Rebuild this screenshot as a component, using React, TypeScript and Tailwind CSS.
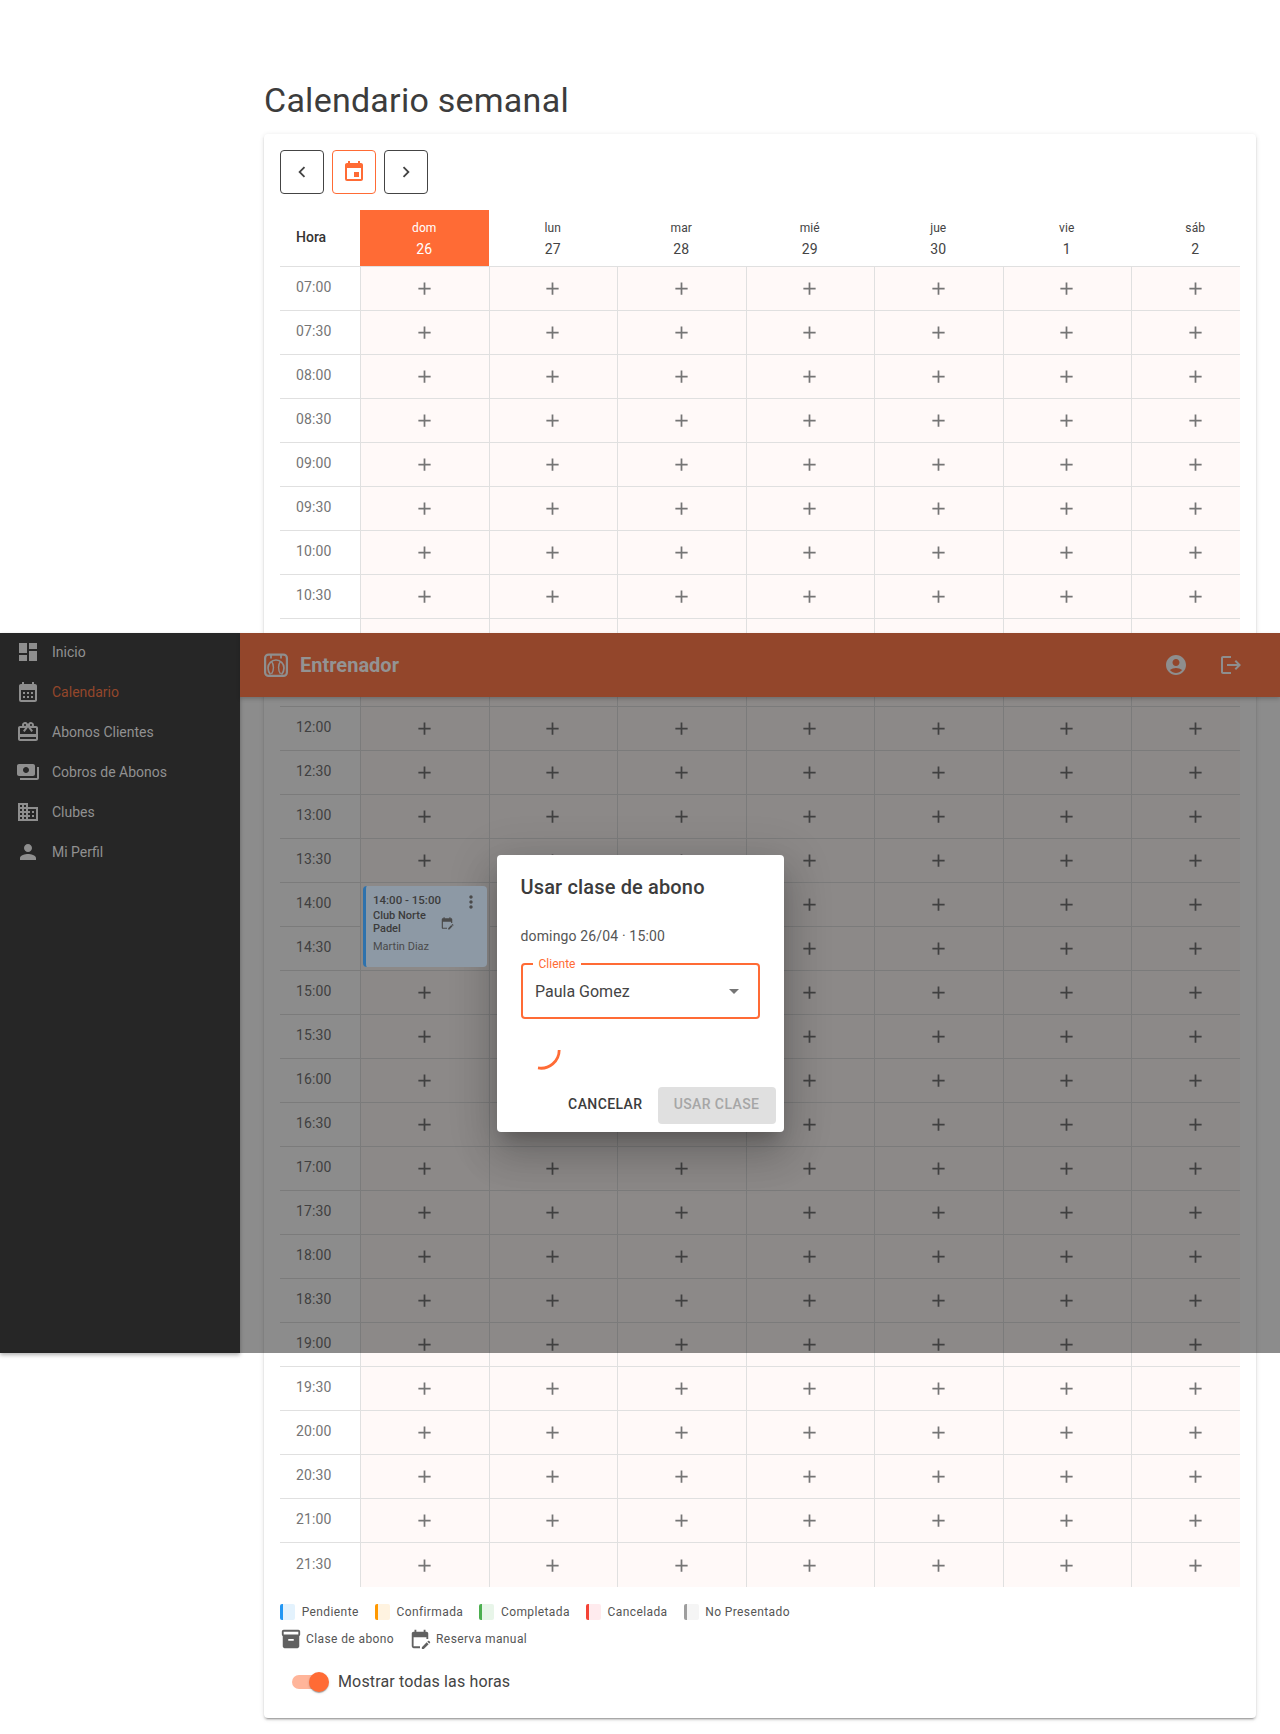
import {
  MdAdd,
  MdAccountCircle,
  MdArrowDropDown,
  MdCalendarMonth,
  MdChevronLeft,
  MdChevronRight,
  MdDashboard,
  MdDomain,
  MdEditCalendar,
  MdEvent,
  MdInventory2,
  MdLogout,
  MdMoreVert,
  MdOutlineCardGiftcard,
  MdPayments,
  MdPerson,
} from "react-icons/md";

const days = [
  { name: "dom", num: 26 },
  { name: "lun", num: 27 },
  { name: "mar", num: 28 },
  { name: "mié", num: 29 },
  { name: "jue", num: 30 },
  { name: "vie", num: 1 },
  { name: "sáb", num: 2 },
];

const hours: string[] = [];
for (let h = 7; h < 22; h++) {
  const label = String(h).padStart(2, "0");
  hours.push(`${label}:00`, `${label}:30`);
}

const legend = [
  { label: "Pendiente", swatch: "bg-[#e3f2fd] border-[#2196f3]" },
  { label: "Confirmada", swatch: "bg-[#fff3e0] border-[#ff9800]" },
  { label: "Completada", swatch: "bg-[#e8f5e9] border-[#4caf50]" },
  { label: "Cancelada", swatch: "bg-[#ffebee] border-[#f44336]" },
  { label: "No Presentado", swatch: "bg-[#f5f5f5] border-[#9e9e9e]" },
];

const menu = [
  { label: "Inicio", icon: MdDashboard },
  { label: "Calendario", icon: MdCalendarMonth, active: true },
  { label: "Abonos Clientes", icon: MdOutlineCardGiftcard },
  { label: "Cobros de Abonos", icon: MdPayments },
  { label: "Clubes", icon: MdDomain },
  { label: "Mi Perfil", icon: MdPerson },
];

function Booking() {
  return (
    <div className="relative z-10 h-full rounded-[4px] border-l-[3px] border-[#2e72ad] bg-[#8d99a5] pl-[7px] pt-[6px] text-[#3c3c3c]">
      <div className="text-[11.5px] leading-[16px] font-medium">14:00 - 15:00</div>
      <div className="mt-[1px] w-[70px] text-[11px] leading-[13px] font-medium text-[#3c3c3c]">Club Norte Padel</div>
      <div className="mt-[4px] text-[11px] leading-[15px] text-[#4a4a4a]">Martin Diaz</div>
      <MdMoreVert className="absolute right-[6px] top-[6px] text-[#4a4a4a]" size={20} />
      <MdEditCalendar className="absolute right-[33px] top-[30px] text-[#4a4a4a]" size={14} />
    </div>
  );
}

function Calendar() {
  return (
    <div className="w-full overflow-hidden">
      <div className="grid w-[980px] grid-cols-[80px_repeat(7,128.5px)]">
        <div className="flex h-[57px] items-center border-b border-[#e0e0e0] pb-[2px] pl-[16px] text-[14px] font-medium text-[#333]">
          Hora
        </div>
        {days.map((d, i) => (
          <div
            key={d.name}
            className={`flex h-[57px] flex-col items-center border-b border-[#e0e0e0] pt-[9px] ${
              i === 0 ? "bg-[#ff6b35] text-white" : "bg-white text-[#444]"
            }`}
          >
            <span className="text-[12px] leading-[18px] tracking-[0.1px]">{d.name}</span>
            <span className="mt-[2px] text-[14px] leading-[20px] tracking-[0.1px]">{d.num}</span>
          </div>
        ))}
        {hours.map((hour, r) => {
          const last = r === hours.length - 1;
          const line = last ? "" : "border-b border-[#e0e0e0]";
          return [
            <div
              key={hour}
              className={`flex h-[44px] items-center pb-[2px] pl-[16px] text-[14px] tracking-[0.1px] text-[#757575] ${line}`}
            >
              {hour}
            </div>,
            ...days.map((d, i) => {
              if (hour === "14:30" && i === 0) return null;
              if (hour === "14:00" && i === 0) {
                return (
                  <div
                    key={d.name + hour}
                    className="row-span-2 h-[88px] border-b border-l border-[#e0e0e0] bg-[#fff9f8] px-[2px] py-[3px]"
                  >
                    <Booking />
                  </div>
                );
              }
              return (
                <div
                  key={d.name + hour}
                  className={`flex h-[44px] items-center justify-center border-l border-[#e0e0e0] bg-[#fff9f8] pr-[1px] text-[#757575] ${line}`}
                >
                  <MdAdd size={21} />
                </div>
              );
            }),
          ];
        })}
      </div>
    </div>
  );
}

function Logo() {
  return (
    <svg width="24" height="24" viewBox="0 0 24 24" fill="none" stroke="#8f8f8f" strokeWidth="2.2">
      <rect x="1.1" y="1.6" width="21.8" height="21.3" rx="3.5" />
      <path d="M7 1v4.5M17 1v4.5" strokeWidth="1.8" />
      <path d="M4 15a8 8 0 0 1 16 0c0 3-1.2 5-2.5 6.5M4 15c0 3 1.2 5 2.5 6.5" strokeWidth="1.7" />
      <path d="M7.5 8.5c2.6 3 2.6 9 0 12.5M16.5 8.5c-2.6 3-2.6 9 0 12.5" strokeWidth="1.4" />
    </svg>
  );
}

function Dialog() {
  return (
    <div className="flex h-[277px] w-[287px] flex-col rounded-[4px] bg-white shadow-[0_11px_15px_-7px_rgba(0,0,0,0.2),0_24px_38px_3px_rgba(0,0,0,0.14),0_9px_46px_8px_rgba(0,0,0,0.12)]">
      <h2 className="px-6 pt-4 text-[20px] leading-[32px] font-medium tracking-[0.15px] text-[#3c3c3c]">
        Usar clase de abono
      </h2>
      <p className="mt-[23px] px-6 text-[14px] leading-[21px] tracking-[0.15px] text-[#555]">domingo 26/04 · 15:00</p>
      <div className="relative mx-6 mt-[16px] flex h-[56px] items-center justify-between rounded-[4px] border-2 border-[#ff6b35] pl-[12.5px] pr-[12px] text-[16px] text-[#444]">
        <span className="absolute left-[10px] top-[-8px] bg-white px-[6px] text-[12px] leading-[14px] text-[#ff6b35]">
          Cliente
        </span>
        <span className="mt-[2px]">Paula Gomez</span>
        <MdArrowDropDown className="text-[#757575]" size={24} />
      </div>
      <div className="mx-6 mt-[11px] h-[40px] w-[40px]">
        <svg width="40" height="40" viewBox="0 0 40 40" fill="none">
          <path d="M38.2 20A18.2 18.2 0 0 1 17 37.95" stroke="#ff6b35" strokeWidth="2.8" />
        </svg>
      </div>
      <div className="mt-auto flex items-center justify-end gap-[15px] pb-[8px] pr-[8px]">
        <button className="mb-[2px] text-[14px] leading-[24px] font-medium tracking-[0.4px] text-[#3c3c3c]">
          CANCELAR
        </button>
        <button className="h-[37px] w-[118px] rounded-[4px] bg-[#e0e0e0] pb-[2px] text-[14px] font-medium tracking-[0.4px] text-[#a6a6a6]">
          USAR CLASE
        </button>
      </div>
    </div>
  );
}

export default function App() {
  return (
    <div className="relative h-[1734px] overflow-hidden bg-white font-['Roboto',sans-serif] text-[#333]">
      <main className="pl-[264px] pr-[24px] pt-[79px]">
        <h1 className="mb-[13px] text-[34px] leading-[42px] tracking-[0.25px] text-[#3c3c3c]">Calendario semanal</h1>
        <section className="h-[1584px] rounded-[4px] bg-white p-4 shadow-[0_3px_1px_-2px_rgba(0,0,0,0.2),0_2px_2px_0_rgba(0,0,0,0.14),0_1px_5px_0_rgba(0,0,0,0.12)]">
          <div className="mb-[16px] flex gap-2">
            <button className="flex h-[44px] w-[44px] items-center justify-center rounded-[4px] border border-[#444] text-[#444]">
              <MdChevronLeft size={22} />
            </button>
            <button className="flex h-[44px] w-[44px] items-center justify-center rounded-[4px] border border-[#ff6b35] text-[#ff6b35]">
              <MdEvent size={24} />
            </button>
            <button className="flex h-[44px] w-[44px] items-center justify-center rounded-[4px] border border-[#444] text-[#444]">
              <MdChevronRight size={22} />
            </button>
          </div>
          <Calendar />
          <div className="mt-[17px] flex gap-[16px]">
            {legend.map((item) => (
              <div key={item.label} className="flex h-[16px] items-center gap-[6.7px]">
                <span className={`h-[16px] w-[15px] rounded-[2px] border-l-[3px] ${item.swatch}`} />
                <span className="text-[12px] tracking-[0.4px] text-[#555]">{item.label}</span>
              </div>
            ))}
          </div>
          <div className="mt-[9px] flex h-[20px] items-center text-[12px] tracking-[0.4px] text-[#555]">
            <MdInventory2 className="text-[#616161]" size={22} />
            <span className="ml-[4px]">Clase de abono</span>
            <MdEditCalendar className="ml-[15px] text-[#616161]" size={22} />
            <span className="ml-[5px]">Reserva manual</span>
          </div>
          <div className="mt-[21px] flex h-[24px] items-center pl-[12px]">
            <div className="relative h-[14px] w-[34px] rounded-full bg-[#ffb59a]">
              <span className="absolute right-[-3px] top-[-3px] h-[20px] w-[20px] rounded-full bg-[#ff6b35] shadow-[0_2px_1px_-1px_rgba(0,0,0,0.2),0_1px_1px_0_rgba(0,0,0,0.14),0_1px_3px_0_rgba(0,0,0,0.12)]" />
            </div>
            <span className="ml-[12px] text-[16px] tracking-[0.15px] text-[#444]">Mostrar todas las horas</span>
          </div>
        </section>
      </main>

      {/* overlay captured mid page: fixed bars and modal sit over the calendar */}
      <div className="absolute left-0 right-0 top-[633px] h-[720px]">
        <div className="absolute inset-0 bg-black/45" />
        <div className="absolute inset-0 flex">
          <aside className="h-full w-[240px] bg-[#262626] shadow-[0_2px_4px_rgba(0,0,0,0.3)]">
            {menu.map((item, i) => {
              const Icon = item.icon;
              return (
                <div
                  key={item.label}
                  className={`flex h-[40px] items-center pl-[16px] text-[14px] ${
                    i === 0 ? "mt-[-1px]" : ""
                  } ${item.active ? "text-[#94472b]" : "text-[#919191]"}`}
                >
                  <Icon className="shrink-0 text-[#8e8e8e]" size={24} />
                  <span className="ml-[12px]">{item.label}</span>
                </div>
              );
            })}
          </aside>
          <header className="flex h-[64px] flex-1 items-center bg-[#93462b] pl-[24px] pr-[37px] shadow-[0_2px_4px_rgba(0,0,0,0.2)]">
            <Logo />
            <span className="ml-[12px] text-[20px] font-bold text-[#939393]">Entrenador</span>
            <MdAccountCircle className="ml-auto text-[#8e8e8e]" size={24} />
            <MdLogout className="ml-[31px] text-[#8e8e8e]" size={24} />
          </header>
        </div>
        <div className="absolute inset-0 flex items-center justify-center">
          <Dialog />
        </div>
      </div>
    </div>
  );
}
